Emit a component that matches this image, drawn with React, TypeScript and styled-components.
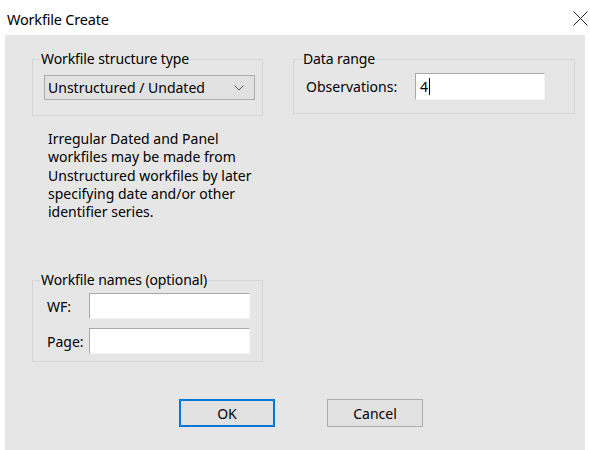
import React from "react";
import styled, { createGlobalStyle } from "styled-components";

const Global = createGlobalStyle`
  html, body { margin: 0; padding: 0; background: #ffffff; }
  body { font-family: "Segoe UI", "Noto Sans", "Liberation Sans", sans-serif; color: #000; }
  * { box-sizing: border-box; }
`;

const Window = styled.div`
  width: 590px;
  height: 450px;
  background: #ffffff;
  display: flex;
  flex-direction: column;
`;

const TitleBar = styled.div`
  height: 35px;
  display: flex;
  align-items: center;
  justify-content: space-between;
  padding: 2px 0 0 7px;
`;

const Title = styled.span`
  font-size: 14.5px;
  letter-spacing: -0.2px;
  color: #000;
`;

const CloseButton = styled.button`
  width: 20px;
  height: 20px;
  border: none;
  background: transparent;
  padding: 0;
  display: flex;
  align-items: center;
  justify-content: center;
`;

const Client = styled.div`
  flex: 1;
  margin: 0 5px;
  background: #e6e6e6;
  display: flex;
  flex-direction: column;
  padding: 14px 0 0 27px;
`;

const Columns = styled.div`
  display: grid;
  grid-template-columns: 231px 282px;
  column-gap: 30px;
  align-items: start;
`;

const Column = styled.div`
  display: flex;
  flex-direction: column;
`;

const Group = styled.fieldset<{ $pad: string }>`
  margin: 0;
  border: 1px solid #d6d6d6;
  padding: ${(p) => p.$pad};
  min-width: 0;
`;

/* legend sits 8px in from the group's outer left edge */
const Legend = styled.legend<{ $shift: number }>`
  font-size: 14px;
  line-height: 20px;
  padding: 0 1px;
  margin-left: ${(p) => p.$shift}px;
  letter-spacing: -0.1px;
`;

const Combo = styled.div`
  height: 25px;
  background: #e1e1e1;
  border: 1px solid #adadad;
  display: flex;
  align-items: center;
  justify-content: space-between;
  padding: 0 10px 0 3px;
  font-size: 14px;
`;

const Note = styled.p`
  margin: 14px 0 0 16px;
  font-size: 14px;
  line-height: 18.3px;
  height: 140px;
`;

const FieldRow = styled.div<{ $gap?: number }>`
  display: flex;
  align-items: center;
  margin-top: ${(p) => p.$gap ?? 0}px;
`;

const Label = styled.span<{ $w: number }>`
  width: ${(p) => p.$w}px;
  font-size: 14px;
`;

const Edit = styled.div<{ $w: number; $h: number }>`
  width: ${(p) => p.$w}px;
  height: ${(p) => p.$h}px;
  background: #ffffff;
  border-style: solid;
  border-width: 1px;
  border-color: #a8a8a8 #f4f4f4 #f4f4f4 #a8a8a8;
  display: flex;
  align-items: center;
  padding-left: 4px;
  font-size: 14px;
`;

const Caret = styled.span`
  display: inline-block;
  width: 1px;
  height: 17px;
  background: #000;
  margin-left: 1px;
`;

const Buttons = styled.div`
  display: flex;
  gap: 52px;
  margin-top: 37px;
  padding-left: 147px;
`;

const Button = styled.button<{ $default?: boolean }>`
  width: 96px;
  height: 28px;
  background: #e1e1e1;
  border: ${(p) => (p.$default ? "2px solid #0078d7" : "1px solid #adadad")};
  font-family: inherit;
  font-size: 14px;
  color: #000;
  padding: 0;
`;

function Chevron() {
  return (
    <svg width="10" height="6" viewBox="0 0 10 6">
      <path d="M0.5 0.5 L5 5 L9.5 0.5" fill="none" stroke="#555" strokeWidth="1" />
    </svg>
  );
}

function CloseIcon() {
  return (
    <svg width="15" height="15" viewBox="0 0 15 15">
      <path d="M0.5 0.5 L14.5 14.5 M14.5 0.5 L0.5 14.5" stroke="#222" strokeWidth="1" />
    </svg>
  );
}

export default function App() {
  return (
    <>
      <Global />
      <Window>
        <TitleBar>
          <Title>Workfile Create</Title>
          <CloseButton aria-label="Close">
            <CloseIcon />
          </CloseButton>
        </TitleBar>
        <Client>
          <Columns>
            <Column>
              <Group $pad="6px 7px 15px 11px">
                <Legend $shift={-4}>Workfile structure type</Legend>
                <Combo>
                  <span>Unstructured / Undated</span>
                  <Chevron />
                </Combo>
              </Group>
              <Note>
                Irregular Dated and Panel
                <br />
                workfiles may be made from
                <br />
                Unstructured workfiles by later
                <br />
                specifying date and/or other
                <br />
                identifier series.
              </Note>
              <Group $pad="3px 12px 7px 14px">
                <Legend $shift={-7}>Workfile names (optional)</Legend>
                <FieldRow>
                  <Label $w={42}>WF:</Label>
                  <Edit $w={161} $h={26} />
                </FieldRow>
                <FieldRow $gap={9}>
                  <Label $w={42}>Page:</Label>
                  <Edit $w={161} $h={26} />
                </FieldRow>
              </Group>
            </Column>
            <Column>
              <Group $pad="4px 29px 13px 12px">
                <Legend $shift={-4}>Data range</Legend>
                <FieldRow>
                  <Label $w={109}>Observations:</Label>
                  <Edit $w={130} $h={27}>
                    4<Caret />
                  </Edit>
                </FieldRow>
              </Group>
            </Column>
          </Columns>
          <Buttons>
            <Button $default>OK</Button>
            <Button>Cancel</Button>
          </Buttons>
        </Client>
      </Window>
    </>
  );
}
